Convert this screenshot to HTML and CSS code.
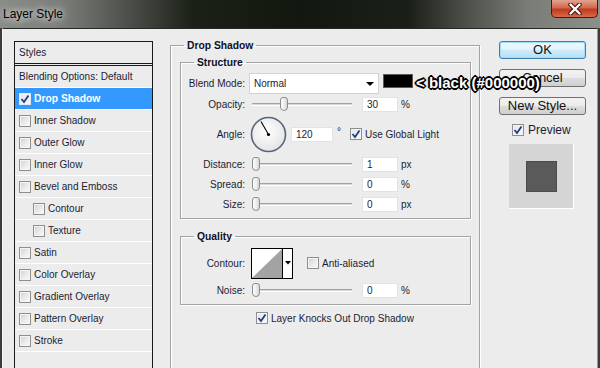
FILE: index.html
```html
<!DOCTYPE html>
<html lang="en">
<head>
    <meta charset="UTF-8">
    <meta name="viewport" content="width=device-width, initial-scale=1.0">
    <title>Layer Style</title>
    <link rel="stylesheet" href="styles.css">
</head>

<body>
    <div class="titlebar">
        <span class="title">Layer Style</span>
        <span class="close">
            <svg width="16" height="12" viewBox="0 0 16 12">
                <path d="M3.5 1.5 L12.5 10.5 M12.5 1.5 L3.5 10.5" stroke="#4a1208" stroke-width="4.4" stroke-linecap="round"/>
                <path d="M3.5 1.5 L12.5 10.5 M12.5 1.5 L3.5 10.5" stroke="#fff" stroke-width="2.4" stroke-linecap="round"/>
            </svg>
        </span>
    </div>

    <div class="window">
        <div class="styles-panel">
            <div class="panel-head">Styles</div>
            <div class="style-row">Blending Options: Default</div>
            <div class="style-row selected"><span class="cb checked"><svg viewBox="0 0 10 10"><path d="M1.5 5 L4 8 L8.5 1.5" fill="none" stroke="#1f3d8c" stroke-width="1.8"/></svg></span>Drop Shadow</div>
            <div class="style-row"><span class="cb"></span>Inner Shadow</div>
            <div class="style-row"><span class="cb"></span>Outer Glow</div>
            <div class="style-row"><span class="cb"></span>Inner Glow</div>
            <div class="style-row"><span class="cb"></span>Bevel and Emboss</div>
            <div class="style-row sub"><span class="cb"></span>Contour</div>
            <div class="style-row sub"><span class="cb"></span>Texture</div>
            <div class="style-row"><span class="cb"></span>Satin</div>
            <div class="style-row"><span class="cb"></span>Color Overlay</div>
            <div class="style-row"><span class="cb"></span>Gradient Overlay</div>
            <div class="style-row"><span class="cb"></span>Pattern Overlay</div>
            <div class="style-row"><span class="cb"></span>Stroke</div>
        </div>

        <fieldset class="group group-main">
            <legend>Drop Shadow</legend>

            <fieldset class="group group-inner structure">
                <legend>Structure</legend>
                <div class="row row-blend">
                    <label class="lbl">Blend Mode:</label>
                    <div class="select"><span>Normal</span><span class="arrow"></span></div>
                    <span class="swatch"></span>
                </div>
                <div class="row">
                    <label class="lbl">Opacity:</label>
                    <div class="slider"><span class="track"></span><span class="thumb" style="left: 30.6px"></span></div>
                    <span class="field">30</span><span class="unit">%</span>
                </div>
                <div class="row row-angle">
                    <label class="lbl">Angle:</label>
                    <svg class="dial" width="37" height="37" viewBox="0 0 37 37">
                        <defs>
                            <radialGradient id="dialFill" cx="0.45" cy="0.4" r="0.6">
                                <stop offset="0" stop-color="#ffffff"/>
                                <stop offset="1" stop-color="#e4e4e4"/>
                            </radialGradient>
                        </defs>
                        <circle cx="18.5" cy="18.5" r="17" fill="url(#dialFill)" stroke="#55647e" stroke-width="1.6"/>
                        <line x1="18.5" y1="18.5" x2="11" y2="5.5" stroke="#000" stroke-width="1.1"/>
                        <circle cx="18.5" cy="18.5" r="1.6" fill="#000"/>
                    </svg>
                    <span class="field field-angle">120</span>
                    <span class="deg">°</span>
                    <span class="cb checked"><svg viewBox="0 0 10 10"><path d="M1.5 5 L4 8 L8.5 1.5" fill="none" stroke="#1f3d8c" stroke-width="1.8"/></svg></span>
                    <span class="cb-text">Use Global Light</span>
                </div>
                <div class="row">
                    <label class="lbl">Distance:</label>
                    <div class="slider"><span class="track"></span><span class="thumb" style="left: 3px"></span></div>
                    <span class="field">1</span><span class="unit">px</span>
                </div>
                <div class="row">
                    <label class="lbl">Spread:</label>
                    <div class="slider"><span class="track"></span><span class="thumb" style="left: 3px"></span></div>
                    <span class="field">0</span><span class="unit">%</span>
                </div>
                <div class="row">
                    <label class="lbl">Size:</label>
                    <div class="slider"><span class="track"></span><span class="thumb" style="left: 3px"></span></div>
                    <span class="field">0</span><span class="unit">px</span>
                </div>
            </fieldset>

            <fieldset class="group group-inner quality">
                <legend>Quality</legend>
                <div class="row row-contour">
                    <label class="lbl">Contour:</label>
                    <svg class="contour" width="42" height="31" viewBox="0 0 42 31">
                        <rect x="0.5" y="0.5" width="41" height="30" fill="#fff" stroke="#000"/>
                        <polygon points="1,30 31,1 31,30" fill="#a3a3a3"/>
                        <line x1="31.5" y1="0" x2="31.5" y2="31" stroke="#000"/>
                        <polygon points="34,13 40,13 37,16.5" fill="#000"/>
                    </svg>
                    <span class="cb"></span>
                    <span class="cb-text">Anti-aliased</span>
                </div>
                <div class="row">
                    <label class="lbl">Noise:</label>
                    <div class="slider"><span class="track"></span><span class="thumb" style="left: 3px"></span></div>
                    <span class="field">0</span><span class="unit">%</span>
                </div>
            </fieldset>

            <div class="row knockout">
                <span class="cb checked"><svg viewBox="0 0 10 10"><path d="M1.5 5 L4 8 L8.5 1.5" fill="none" stroke="#1f3d8c" stroke-width="1.8"/></svg></span>
                <span class="cb-text">Layer Knocks Out Drop Shadow</span>
            </div>
        </fieldset>

        <div class="actions">
            <button type="button" class="btn btn-default">OK</button>
            <button type="button" class="btn">Cancel</button>
            <button type="button" class="btn">New Style...</button>
            <div class="preview-check">
                <span class="cb checked"><svg viewBox="0 0 10 10"><path d="M1.5 5 L4 8 L8.5 1.5" fill="none" stroke="#1f3d8c" stroke-width="1.8"/></svg></span>
                <span>Preview</span>
            </div>
            <div class="preview-box"><span class="preview-square"></span></div>
        </div>

        <div class="note">&lt; black (#000000)</div>
    </div>
</body>
</html>
```

FILE: styles.css
```css
body {
    margin: 0;
    height: 368px;
    overflow: hidden;
    background-color: #3b3d3a;
    font-family: "Liberation Sans", Arial, sans-serif;
    font-size: 10px;
    color: #1b1d33;
}

/* title bar (aero glass) */
.titlebar {
    height: 28px;
    display: flex;
    align-items: flex-start;
    background: linear-gradient(90deg, #8a8c88 0%, #7c7e7a 10%, #4a4d47 22%, #1c2118 32%, #12170f 50%, #1a1f17 68%, #4e524b 78%, #7a7d77 88%, #8c8f8a 100%);
}

.title {
    margin: 6px 0 0 3px;
    font-size: 12px;
    line-height: 16px;
    color: #000;
    text-shadow: 0 0 6px #e8e8e8, 0 0 10px #d0d0d0;
}

.close {
    margin-left: auto;
    margin-right: 2px;
    width: 47px;
    height: 18px;
    box-sizing: border-box;
    border: 1px solid #4c170c;
    border-top: none;
    border-radius: 0 0 5px 5px;
    background: linear-gradient(#e4a291 0%, #d26a50 45%, #c13a1c 55%, #d9694b 100%);
    display: flex;
    align-items: center;
    justify-content: center;
}

/* dialog body */
.window {
    position: relative;
    height: 340px;
    margin: 0 2px;
    box-sizing: border-box;
    border-top: 1px solid #262825;
    border-left: 1px solid #f6f6f6;
    border-right: 1px solid #9a9a9a;
    background-color: #ececec;
    display: flex;
    align-items: flex-start;
    padding: 10px 0 0 11px;
}

.styles-panel {
    width: 139px;
    height: 340px;
    margin-top: 2px;
    box-sizing: border-box;
    border: 1px solid #1a1a1a;
    border-bottom: none;
}

.panel-head {
    height: 21px;
    line-height: 21px;
    padding-left: 4px;
    border-bottom: 3px double #1a1a1a;
}

.style-row {
    height: 21px;
    display: flex;
    align-items: center;
    padding-left: 4px;
    border-bottom: 1px solid #fff;
}

.style-row .cb {
    margin-right: 3px;
}

.style-row.sub {
    padding-left: 18px;
}

.style-row.selected {
    background-color: #3399ff;
    color: #fff;
    font-weight: bold;
    font-size: 10.3px;
}

.style-row.selected .cb {
    border-color: #dfe8f5;
}

/* checkboxes */
.cb {
    width: 12px;
    height: 12px;
    box-sizing: border-box;
    border: 1px solid #8e8f8f;
    background: linear-gradient(135deg, #d2d2d2 0%, #ededed 60%, #fafafa 100%);
    box-shadow: inset 0 0 0 1px #f4f4f4;
    flex: none;
    display: flex;
}

.cb.checked {
    background: linear-gradient(135deg, #e6e6e6 0%, #f7f7f7 100%);
}

.cb svg {
    width: 10px;
    height: 10px;
}

.cb-text {
    margin-left: 3px;
}

/* group boxes */
.group {
    margin: 0;
    padding: 0;
    min-width: 0;
    box-sizing: border-box;
    border: 1px solid #a3a3a3;
    box-shadow: 1px 1px 0 #fff, inset 1px 1px 0 #fff;
}

.group legend {
    margin-left: 13px;
    padding: 0 3px;
    font-weight: bold;
    font-size: 10.3px;
    line-height: 13px;
    color: #0e1025;
}

.group-main {
    width: 310px;
    height: 360px;
    margin-left: 17px;
}

.group-inner {
    margin: 4px 8px 0 9px;
}

.structure {
    padding-bottom: 4px;
}

.quality {
    margin-top: 11px;
    padding-bottom: 4px;
}

/* control rows */
.row {
    height: 20px;
    display: flex;
    align-items: center;
}

.lbl {
    width: 64px;
    margin-right: 4px;
    text-align: right;
    flex: none;
}

.row-blend {
    height: 21px;
    margin-top: 4px;
}

.select {
    width: 130px;
    height: 21px;
    box-sizing: border-box;
    border: 1px solid #d2d2d2;
    background-color: #fff;
    display: flex;
    align-items: center;
    padding-left: 4px;
}

.select .arrow {
    margin-left: auto;
    margin-right: 4px;
    border-top: 4px solid #000;
    border-left: 4px solid transparent;
    border-right: 4px solid transparent;
}

.swatch {
    width: 30px;
    height: 14px;
    box-sizing: border-box;
    margin-left: 4px;
    align-self: flex-start;
    margin-top: 1px;
    background-color: #000;
    border: 1px solid #5a5a5a;
}

.slider {
    position: relative;
    width: 103px;
    height: 20px;
    display: flex;
    align-items: center;
    flex: none;
}

.track {
    width: 100px;
    height: 3px;
    margin-left: 3px;
    box-sizing: border-box;
    border-top: 1px solid #a2a2a2;
    border-bottom: 1px solid #fff;
    background-color: #d8d8d8;
}

.thumb {
    position: absolute;
    top: 3px;
    width: 8px;
    height: 14px;
    box-sizing: border-box;
    border: 1px solid #8d8d8d;
    border-radius: 3px 3px 4px 4px;
    background: linear-gradient(90deg, #fdfdfd 0%, #eaeaea 60%, #d6d6d6 100%);
}

.field {
    width: 36px;
    height: 15px;
    box-sizing: border-box;
    margin-left: 10px;
    padding-left: 4px;
    line-height: 13px;
    background-color: #fff;
    border: 1px solid #e3e3e3;
    color: #1d1d3a;
    flex: none;
}

.unit {
    margin-left: 3px;
}

.row-angle {
    height: 40px;
}

.dial {
    margin-left: 1px;
    flex: none;
}

.field-angle {
    width: 42px;
    margin-left: 4px;
}

.deg {
    margin-left: 4px;
    margin-right: 9px;
    margin-bottom: 6px;
}

.row-contour {
    height: 30px;
    margin-top: 5px;
}

.row-contour + .row {
    margin-top: 2px;
}

.contour {
    margin-left: 2px;
    margin-right: 14px;
    flex: none;
}

.knockout {
    margin-top: 3px;
    padding-left: 85px;
}

/* right column */
.actions {
    margin: 2px 0 0 19px;
    width: 87px;
    display: flex;
    flex-direction: column;
}

.btn {
    width: 87px;
    height: 18px;
    margin-bottom: 10px;
    padding: 0;
    box-sizing: border-box;
    border: 1px solid #707070;
    border-radius: 3px;
    background: linear-gradient(#f2f2f2 0%, #ebebeb 50%, #dddddd 50%, #cfcfcf 100%);
    font-family: "Liberation Sans", Arial, sans-serif;
    font-size: 13px;
    line-height: 16px;
    color: #111;
}

.btn-default {
    border-color: #3c7fb1;
    box-shadow: inset 0 0 0 1px #9fdcf6;
    background: linear-gradient(#eef8fd 0%, #e2f3fc 50%, #cdeafa 50%, #b6e0f6 100%);
}

.preview-check {
    height: 18px;
    margin-top: -4px;
    padding-left: 13px;
    display: flex;
    align-items: center;
    font-size: 12px;
}

.preview-check .cb {
    margin-right: 4px;
}

.preview-box {
    width: 65px;
    height: 65px;
    margin: 5px 0 0 10px;
    box-sizing: border-box;
    background-color: #d5d5d5;
    border-right: 1px solid #fff;
    border-bottom: 1px solid #fff;
    display: flex;
    align-items: center;
    justify-content: center;
}

.preview-square {
    width: 31px;
    height: 31px;
    box-sizing: border-box;
    background-color: #5a5a5a;
    border: 1px solid #4b4b4b;
}

/* annotation pasted over the dialog */
.note {
    position: absolute;
    left: 413px;
    top: 44px;
    font-size: 15px;
    font-weight: bold;
    line-height: 20px;
    white-space: nowrap;
    color: #fff;
    text-shadow: 1px 0 0 #000, -1px 0 0 #000, 0 1px 0 #000, 0 -1px 0 #000,
        1px 1px 0 #000, -1px -1px 0 #000, 1px -1px 0 #000, -1px 1px 0 #000,
        2px 0 0 #000, -2px 0 0 #000, 0 2px 0 #000, 0 -2px 0 #000;
}
```
